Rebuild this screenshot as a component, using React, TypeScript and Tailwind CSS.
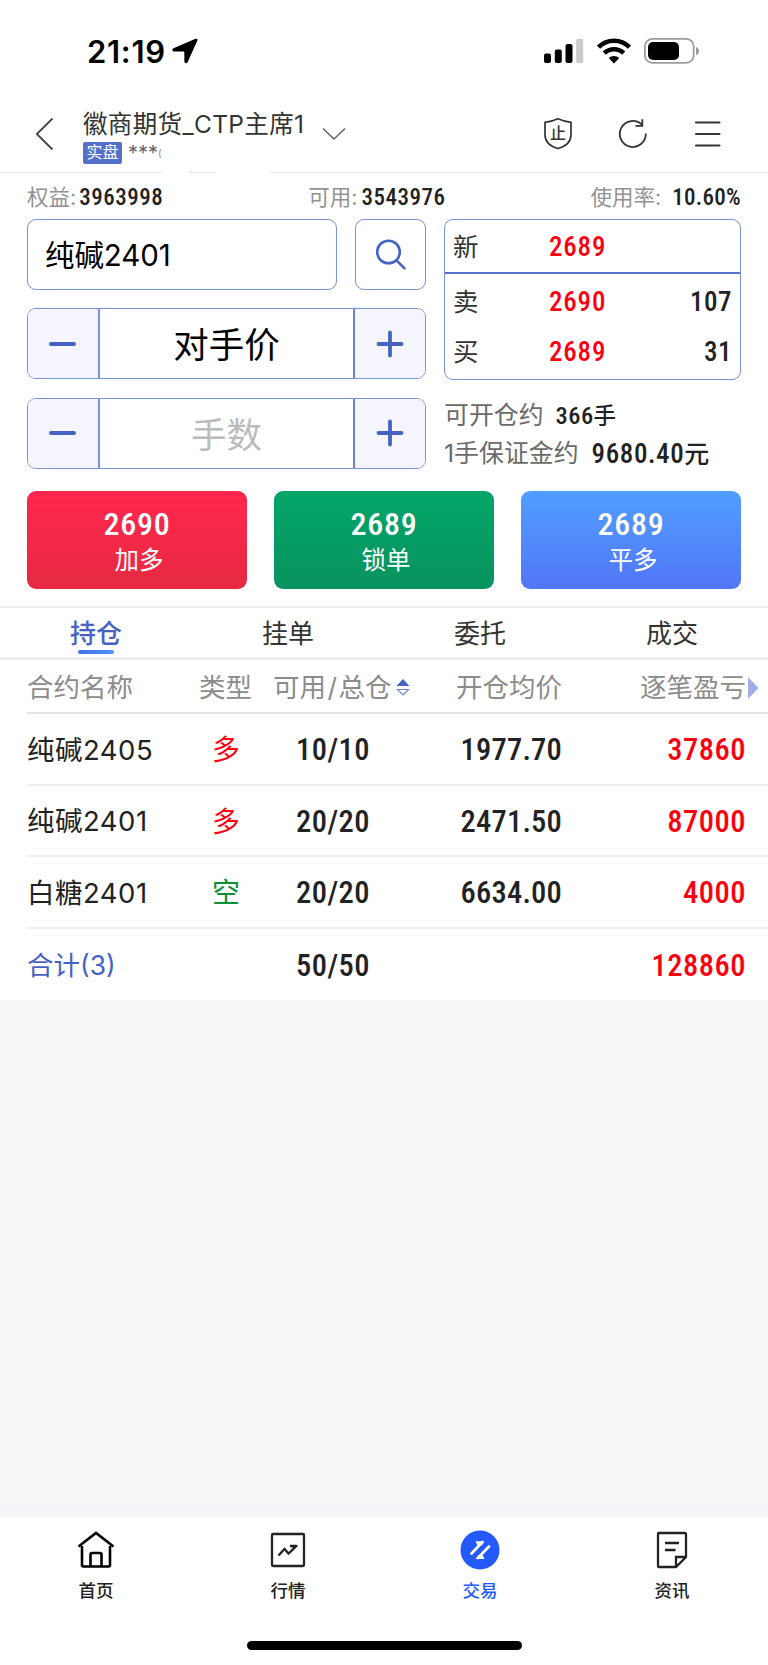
import { clsx } from "clsx";
import type { ReactNode } from "react";

type Position = {
  name: string;
  side?: "多" | "空";
  volume: string;
  price?: string;
  profit: string;
};

const positions: Position[] = [
  { name: "纯碱2405", side: "多", volume: "10/10", price: "1977.70", profit: "37860" },
  { name: "纯碱2401", side: "多", volume: "20/20", price: "2471.50", profit: "87000" },
  { name: "白糖2401", side: "空", volume: "20/20", price: "6634.00", profit: "4000" },
];

const tabs = ["持仓", "挂单", "委托", "成交"];

const actions = [
  { price: "2690", label: "加多", color: "from-[#ff264f] to-[#e62a41]" },
  { price: "2689", label: "锁单", color: "from-[#02a568] to-[#08935f]" },
  { price: "2689", label: "平多", color: "from-[#4f9eff] to-[#5276f7]" },
];

function Num({ className, children }: { className?: string; children: ReactNode }) {
  return (
    <span className={clsx("font-['Roboto','Noto_Sans_CJK_SC',sans-serif] font-medium [font-stretch:84%]", className)}>
      {children}
    </span>
  );
}

function StatusBar() {
  return (
    <div className="flex h-[94px] shrink-0 items-center pt-[8px] pl-[87px] text-black">
      <span className="w-[78px] text-[31px] leading-none font-semibold tracking-[0.700px]">21:19</span>
      <svg className="ml-[7px] h-[26px] w-[26px]" viewBox="0 0 26 26">
        <path d="M23.500.8 1.500 10.300c-1.800.8-1.300 3.200.6 3.200h9.400c.5 0 .8.3.8.8l.1 9.300c0 1.900 2.400 2.300 3.200.6L25.400 2.600c.6-1.300-.6-2.400-1.900-1.800Z" fill="#000" />
      </svg>
      <svg className="ml-[346px] h-[26px] w-[40px]" viewBox="0 0 40 26">
        <rect x="0" y="15.500" width="7" height="9.500" rx="2" />
        <rect x="10.800" y="11.500" width="7" height="13.500" rx="2" />
        <rect x="21.500" y="6" width="7" height="19" rx="2" />
        <rect x="32.200" y="0.800" width="7" height="24.200" rx="2" fill="#cbcbcb" />
      </svg>
      <svg className="ml-[12px] h-[26px] w-[36px]" viewBox="0 0 36 26">
        <g fill="none" stroke="#000" strokeWidth="4.600">
          <path d="M2.500 9.200a22 22 0 0 1 31 0" />
          <path d="M8.300 15.200a14 14 0 0 1 19.400 0" />
        </g>
        <path d="M18 25.500l-5.300-5.400a7.600 7.600 0 0 1 10.600 0Z" />
      </svg>
      <svg className="ml-[12px] h-[26px] w-[56px]" viewBox="0 0 56 26">
        <rect x="0.900" y="0.900" width="48.800" height="24" rx="7.500" fill="none" stroke="#9c9c9c" strokeWidth="1.800" />
        <rect x="4" y="4" width="31" height="18" rx="5" />
        <path d="M52 9c4 1.300 4 7 0 8.300Z" fill="#9c9c9c" />
      </svg>
    </div>
  );
}

function Header() {
  return (
    <header className="flex h-[78px] shrink-0 items-start pl-[35px] text-[#333]">
      <svg className="mt-[23px] h-[34px] w-[19px]" viewBox="0 0 19 34" fill="none" stroke="#444" strokeWidth="1.800">
        <path d="M17.500 1.500 1.800 17l15.700 15.500" />
      </svg>
      <div className="ml-[29px] w-[220px] pt-[13px]">
        <div className="text-[24.500px] leading-[34px] tracking-[0.350px] whitespace-nowrap">徽商期货_CTP主席1</div>
        <div className="flex items-center">
          <span className="h-[22px] w-[39px] rounded-[2px] bg-[#5470c9] text-center text-[16px] leading-[21px] text-white">实盘</span>
          <span className="ml-[6px] text-[20px] leading-[24px] text-[#666]">***</span>
          <span className="text-[10px] leading-[24px] text-[#888]">(</span>
        </div>
      </div>
      <svg className="mt-[33px] ml-[19px] h-[14px] w-[24px]" viewBox="0 0 24 14" fill="none" stroke="#666" strokeWidth="1.600">
        <path d="M1 1.500 12 12 23 1.500" />
      </svg>
      <div className="mt-[23px] ml-auto flex items-center pr-[46px]">
        <svg className="h-[33px] w-[30px]" viewBox="0 0 30 33" fill="none" stroke="#333" strokeWidth="1.700">
          <path d="M15 1.700c4.500 2 8.500 3.200 13 3.700v12.300c0 7.300-5.500 11.600-13 13.800C7.500 29.300 2 25 2 17.700V5.400C6.500 4.900 10.500 3.700 15 1.700Z" />
          <text x="15" y="22" textAnchor="middle" fill="#333" stroke="none" className="text-[16px] font-medium">止</text>
        </svg>
        <svg className="ml-[45px] h-[32px] w-[30px]" viewBox="0 0 30 32" fill="none" stroke="#333" strokeWidth="1.800">
          <path d="M27.800 15.500A13 13 0 1 1 24 6.800" />
          <path d="M24.300 1.300v6.500h-6.800" />
        </svg>
        <svg className="ml-[46px] h-[28px] w-[28px]" viewBox="0 0 28 28" stroke="#333" strokeWidth="2" strokeLinecap="round">
          <path d="M2 2.500h23.500M2 14h23.500M2 25.500h23.500" />
        </svg>
      </div>
    </header>
  );
}

function Stepper({ children, muted }: { children: ReactNode; muted?: boolean }) {
  return (
    <div className="flex h-[71px] w-[399px] overflow-hidden rounded-[9px] border border-[#7d91d8]">
      <button className="flex w-[72px] items-center justify-center border-r-2 border-[#7d91d0] bg-[#f4f5fd]">
        <span className="mr-px h-[4px] w-[27px] rounded-full bg-[#4663c4]" />
      </button>
      <div className={clsx("flex-1 text-center text-[35.500px] leading-[73px]", muted ? "text-[#bbb]" : "text-black")}>
        {children}
      </div>
      <button className="flex w-[72px] items-center justify-center border-l-2 border-[#6a82d0] bg-[#f4f5fd]">
        <svg className="h-[28px] w-[28px]" viewBox="0 0 28 28" stroke="#4663c4" strokeWidth="3.800" strokeLinecap="round">
          <path d="M2.500 14h23M14 2.500v23" />
        </svg>
      </button>
    </div>
  );
}

function Stats() {
  return (
    <div className="flex h-[44px] shrink-0 items-center justify-between pt-[3px] pr-[27px] pl-[27px] text-[21.500px] leading-none text-[#929292]">
      <div className="flex items-center">
        权益:<Num className="ml-[3px] text-[23px] tracking-[0.500px] text-[#222]">3963998</Num>
      </div>
      <div className="flex items-center">
        可用:<Num className="ml-[4px] text-[23px] tracking-[0.500px] text-[#222]">3543976</Num>
      </div>
      <div className="flex items-center">
        使用率:<Num className="ml-[11px] text-[23px] tracking-[0.300px] text-[#222]">10.60%</Num>
      </div>
    </div>
  );
}

function QuoteRow({ label, price, volume, className }: { label: string; price: string; volume?: string; className?: string }) {
  return (
    <div className={clsx("flex items-center pr-[8px] pl-[8px] text-[25.500px] text-[#333]", className)}>
      <span className="w-[96px]">{label}</span>
      <Num className="text-[27px] tracking-[0.800px] text-[#fb0010]">{price}</Num>
      <Num className="ml-auto text-[27px] tracking-[0.500px] text-[#222]">{volume}</Num>
    </div>
  );
}

function OrderForm() {
  return (
    <section className="flex h-[251px] shrink-0 gap-[18px] px-[27px] pt-px">
      <div className="flex flex-col gap-[18.300px]">
        <div className="flex gap-[18px]">
          <div className="h-[71px] w-[310px] rounded-[9px] border border-[#7d91d8] pl-[17px] text-[29.500px] leading-[70px] tracking-[-0.100px] text-black">
            纯碱2401
          </div>
          <button className="flex h-[71px] w-[71px] items-center justify-center rounded-[9px] border border-[#7d91d8]">
            <svg className="h-[32px] w-[32px]" viewBox="0 0 32 32" fill="none" stroke="#4663c4" strokeWidth="2.600" strokeLinecap="round">
              <circle cx="13.500" cy="13" r="11.300" />
              <path d="m21.500 21.300 8 8" />
            </svg>
          </button>
        </div>
        <Stepper>对手价</Stepper>
        <Stepper muted>手数</Stepper>
      </div>
      <div className="w-[297px]">
        <div className="h-[161px] rounded-[9px] border border-[#7d91d8]">
          <QuoteRow className="h-[54px] border-b-2 border-[#5872ca] pt-[2px]" label="新" price="2689" />
          <QuoteRow className="h-[57px]" label="卖" price="2690" volume="107" />
          <QuoteRow className="h-[42px]" label="买" price="2689" volume="31" />
        </div>
        <div className="mt-[17px] flex h-[38px] items-center text-[24.900px] whitespace-nowrap text-[#6b6b6b]">
          可开仓约<Num className="ml-[12px] text-[24.500px] tracking-[0.400px] text-[#222]">366<span className="text-[22.500px]">手</span></Num>
        </div>
        <div className="flex h-[38px] items-center text-[24.900px] whitespace-nowrap text-[#6b6b6b]">
          1手保证金约<Num className="ml-[13px] text-[27px] tracking-[0.600px] text-[#222]">9680.40<span className="text-[25px]">元</span></Num>
        </div>
      </div>
    </section>
  );
}

function PositionRow({ row, total }: { row: Position; total?: boolean }) {
  return (
    <div className={clsx("ml-[27px] flex h-[71.500px] items-center pt-[3px] text-[27.500px] text-[#222]", !total && "border-b-2 border-[#f0f0f0]")}>
      <span className={clsx("w-[172px] whitespace-nowrap", total ? "text-[26.500px] text-[#4663c4]" : "tracking-[0.500px]")}>{row.name}</span>
      <span className={clsx("w-[54px] text-center text-[28px]", row.side === "空" ? "text-[#0b9138]" : "text-[#fb0010]")}>{row.side}</span>
      <Num className="w-[160px] text-center text-[30.500px] tracking-[0.500px]">{row.volume}</Num>
      <Num className="w-[149px] text-right text-[30.500px] tracking-[0.200px]">{row.price}</Num>
      <Num className="w-[184px] text-right text-[30.500px] tracking-[0.500px] text-[#fb0010]">{row.profit}</Num>
    </div>
  );
}

function Positions() {
  return (
    <section className="shrink-0">
      <div className="ml-[27px] flex h-[54px] items-center border-b-2 border-[#e3e3e3] pt-[3px] text-[26.500px] whitespace-nowrap text-[#8c8c8c]">
        <span className="w-[172px]">合约名称</span>
        <span className="w-[74px]">类型</span>
        <span className="flex w-[183px] items-center">
          <span>可用<span className="px-[1.500px]">/</span>总仓</span>
          <svg className="ml-[4px] h-[17px] w-[14px]" viewBox="0 0 14 17">
            <path d="m7 0 6.500 7H.500Z" fill="#4663c4" />
            <path d="m7 16 5.500-5.500h-11Z" fill="none" stroke="#7086d2" strokeWidth="1.200" />
          </svg>
        </span>
        <span className="w-[184px]">开仓均价</span>
        <span>逐笔盈亏</span>
        <svg className="ml-[2px] h-[22px] w-[11px] shrink-0" viewBox="0 0 11 22">
          <path d="M0 0 10.500 11 0 22Z" fill="#a3afe2" />
        </svg>
      </div>
      {positions.map((row) => (
        <PositionRow key={row.name} row={row} />
      ))}
      <PositionRow total row={{ name: "合计(3)", volume: "50/50", profit: "128860" }} />
    </section>
  );
}

function NavItem({ label, active, children }: { label: string; active?: boolean; children: ReactNode }) {
  return (
    <a className={clsx("flex w-[192px] flex-col items-center text-[17.500px] leading-[26px] font-medium", active ? "text-[#2459fb]" : "text-[#222]")}>
      <svg className="mt-[13px] mb-[8px] h-[40px] w-[40px]" viewBox="0 0 40 40" fill="none" stroke="#222" strokeWidth="2.300">
        {children}
      </svg>
      {label}
    </a>
  );
}

function BottomNav() {
  return (
    <nav className="flex h-[118px] shrink-0">
      <NavItem label="首页">
        <path d="M6 16v19q0 1.500 1.500 1.500h25Q34 36.500 34 35V16M2.500 16.500 20 3l17.500 13.500M14.500 36V24.500q0-1.500 1.500-1.500h8q1.500 0 1.500 1.500V36" stroke="#000" strokeWidth="2.600" />
      </NavItem>
      <NavItem label="行情">
        <rect x="4" y="4" width="32" height="32" rx="1" />
        <path d="m10.500 25.500 6-6.500 4 4.500 8.500-8M22 16h6.500" />
        <path d="M23 15h7l-4.500 4.500Z" fill="#222" stroke="none" />
      </NavItem>
      <NavItem label="交易" active>
        <circle cx="20" cy="20" r="19.500" fill="#2459fb" stroke="none" />
        <path d="m11.500 23.500 11-11.500M29 16.500 17.800 28" stroke="#fff" strokeWidth="2.700" strokeLinecap="round" />
        <path d="M15.500 11.200h8.500l-2 4h-4.500ZM24.500 29H15.500l3.500-4h3.500Z" fill="#fff" stroke="none" />
      </NavItem>
      <NavItem label="资讯">
        <path d="M6.500 3h26q1.500 0 1.500 1.500V27L24 37H6.500Q6 37 6 35.500v-31Q6 3 6.500 3ZM24 37V27h10M13 13h14M13 20h10.500" />
      </NavItem>
    </nav>
  );
}

export default function App() {
  return (
    <div className="flex h-[1665px] w-[768px] flex-col bg-white font-['Inter','Noto_Sans_CJK_SC',sans-serif]">
      <StatusBar />
      <Header />
      <div className="flex h-px shrink-0">
        <span className="w-[162px] bg-[#e6e6e6]" />
        <span className="ml-[27px] w-[26px] bg-[#e6e6e6]" />
        <span className="ml-[55px] flex-1 bg-[#e6e6e6]" />
      </div>
      <div className="h-px shrink-0" />
      <Stats />
      <OrderForm />
      <div className="mt-[21.500px] flex shrink-0 gap-[27px] px-[27px]">
        {actions.map((a) => (
          <button key={a.label} className={clsx("flex h-[98px] w-[220px] flex-col items-center rounded-[9px] bg-linear-to-b pt-[13px] text-white", a.color)}>
            <Num className="text-[32px] leading-[41px] tracking-[0.700px]">{a.price}</Num>
            <span className="pl-[4px] text-[24.500px] leading-[30px]">{a.label}</span>
          </button>
        ))}
      </div>
      <div className="mt-[17.500px] flex h-[54px] shrink-0 border-t-2 border-b-3 border-[#eee]">
        {tabs.map((tab, i) => (
          <div key={tab} className={clsx("flex w-[192px] flex-col items-center text-[26px] leading-[52px]", i === 0 ? "font-medium text-[#4663c4]" : "text-[#333]")}>
            <span className="h-[42px]">{tab}</span>
            {i === 0 && <span className="h-[4px] w-[36px] rounded-full bg-linear-to-r from-[#4470e8] to-[#4f96f8]" />}
          </div>
        ))}
      </div>
      <Positions />
      <div className="flex flex-1 flex-col justify-end bg-[#f7f7f7]">
        <div className="h-[14px] bg-[#f4f5f8]" />
      </div>
      <BottomNav />
      <div className="flex h-[30px] shrink-0 justify-center pt-[6px]">
        <span className="h-[9px] w-[275px] rounded-full bg-black" />
      </div>
    </div>
  );
}
